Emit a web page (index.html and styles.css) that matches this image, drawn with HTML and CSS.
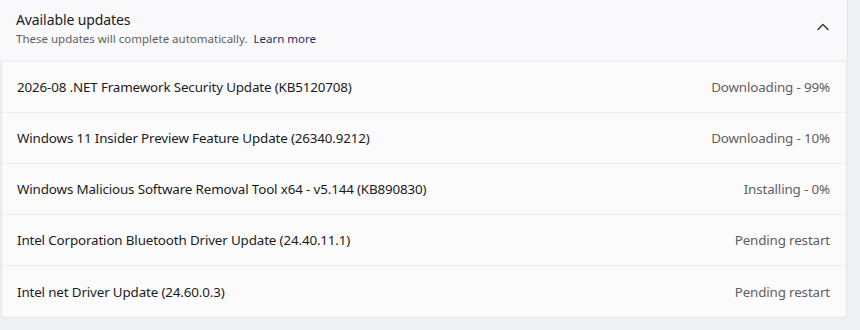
FILE: index.html
```html
<!DOCTYPE html>
<html>
<head>
<meta charset="utf-8">
<link rel="stylesheet" href="styles.css">
</head>
<body>
<div class="page">
  <div class="header">
    <div class="header-text">
      <div class="title">Available updates</div>
      <div class="subtitle">These updates will complete automatically. <a class="link">Learn more</a></div>
    </div>
    <svg class="chevron" width="12" height="8" viewBox="0 0 12 8"><path d="M1 6.5 L6 1.5 L11 6.5" fill="none" stroke="#2a2a2a" stroke-width="1.2" stroke-linecap="round" stroke-linejoin="round"/></svg>
  </div>
  <div class="card">
    <div class="row"><span>2026-08 .NET Framework Security Update (KB5120708)</span><span class="status">Downloading - 99%</span></div>
    <div class="row"><span>Windows 11 Insider Preview Feature Update (26340.9212)</span><span class="status">Downloading - 10%</span></div>
    <div class="row"><span>Windows Malicious Software Removal Tool x64 - v5.144 (KB890830)</span><span class="status">Installing - 0%</span></div>
    <div class="row"><span>Intel Corporation Bluetooth Driver Update (24.40.11.1)</span><span class="status">Pending restart</span></div>
    <div class="row"><span>Intel net Driver Update (24.60.0.3)</span><span class="status">Pending restart</span></div>
  </div>
</div>
</body>
</html>
```
FILE: styles.css
```css
html, body {
  margin: 0;
  padding: 0;
  background: #eef0f3;
  font-family: "Noto Sans", "Open Sans", sans-serif;
  color: #1b1b1b;
}
.page {
  width: 848px;
  display: flex;
  flex-direction: column;
  gap: 2px;
}
.header {
  height: 60px;
  box-sizing: border-box;
  background: #f9f9fb;
  border-right: 1px solid #e3e3e6;
  display: flex;
  align-items: center;
  justify-content: space-between;
  padding: 0 18px 0 16px;
}
.header-text {
  display: flex;
  flex-direction: column;
  gap: 1px;
  margin-top: -3px;
}
.title {
  font-size: 14px;
  line-height: 20px;
  letter-spacing: -0.1px;
}
.subtitle {
  font-size: 11.5px;
  line-height: 16px;
  color: #5f5f5f;
}
.link {
  color: #1f2f5e;
  margin-left: 3px;
}
.chevron {
  display: block;
  margin-top: -6px;
}
.card {
  margin: 0 1px 0 1px;
  background: #fbfbfc;
  border: 1px solid #e5e5e7;
  border-top: none;
  border-radius: 0 0 5px 5px;
  box-shadow: 0 1px 1px rgba(0,0,0,0.04);
}
.row {
  height: 51px;
  box-sizing: border-box;
  display: flex;
  align-items: center;
  justify-content: space-between;
  padding: 0 16px 0 15px;
  font-size: 13.4px;
  letter-spacing: -0.15px;
  border-bottom: 1px solid #ececee;
}
.row:last-child {
  border-bottom: none;
}
.status {
  color: #5f5f5f;
}
```
